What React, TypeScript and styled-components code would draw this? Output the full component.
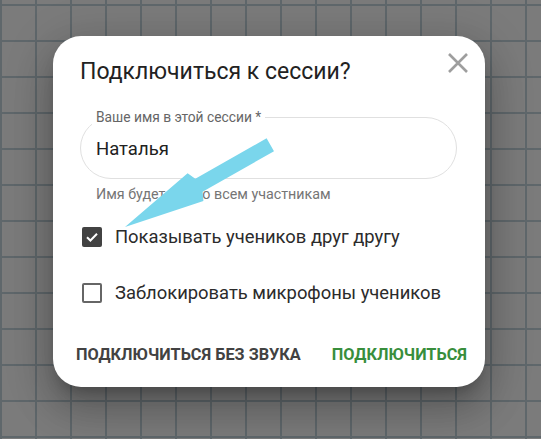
import React, { useState } from 'react';
import styled, { createGlobalStyle } from 'styled-components';

const Global = createGlobalStyle`
  html, body {
    margin: 0;
    padding: 0;
    background: #7b7b7b;
  }
  * { box-sizing: border-box; }
  body {
    font-family: Roboto, "Noto Sans", "Liberation Sans", sans-serif;
  }
`;

const Page = styled.div`
  position: relative;
  width: 541px;
  height: 439px;
  overflow: hidden;
  padding: 36px 0 0 53px;
  background-color: #7b7b7b;
  background-image:
    linear-gradient(to right, #5f676b 2px, transparent 2px),
    linear-gradient(to bottom, #5f676b 2px, transparent 2px);
  background-size: 35px 36px;
  background-position: 0 4px;
`;

const Dialog = styled.div`
  width: 432px;
  height: 351px;
  background: #fff;
  border-radius: 28px;
  padding: 20px 28px 0 27px;
  display: flex;
  flex-direction: column;
  box-shadow:
    0 11px 15px -7px rgba(0, 0, 0, 0.25),
    0 24px 38px 3px rgba(0, 0, 0, 0.16),
    0 9px 46px 8px rgba(0, 0, 0, 0.14);
`;

const Header = styled.div`
  display: flex;
  justify-content: space-between;
  align-items: flex-start;
`;

const Title = styled.h2`
  margin: 0;
  font-size: 23px;
  line-height: 32px;
  font-weight: 400;
  color: #222;
`;

const CloseButton = styled.button`
  width: 20px;
  height: 20px;
  margin: -3px -11px 0 0;
  padding: 0;
  border: none;
  background: none;
  cursor: pointer;
  display: flex;
`;

const Field = styled.fieldset`
  margin: 21px 0 0;
  padding: 14px 15px 19px;
  border: 1px solid #e0e0e0;
  border-radius: 31px;
  min-width: 0;
`;

const Legend = styled.legend`
  margin-left: -4px;
  padding: 0 4px;
  font-size: 13.8px;
  line-height: 16px;
  color: #666;
`;

const Input = styled.input`
  display: block;
  width: 100%;
  height: 20px;
  padding: 0;
  border: none;
  outline: none;
  font-family: inherit;
  font-size: 18.5px;
  color: #212121;
  background: transparent;
`;

const Helper = styled.div`
  margin: 7px 0 0 16px;
  font-size: 14.3px;
  line-height: 16px;
  color: #757575;
`;

const Options = styled.div`
  margin-top: 15px;
  display: flex;
  flex-direction: column;
  gap: 16px;
`;

const Option = styled.label`
  height: 40px;
  display: flex;
  align-items: center;
  gap: 13px;
  padding-left: 2px;
  cursor: pointer;
  font-size: 18.4px;
  line-height: 24px;
  color: #2b2b2b;
`;

const Box = styled.span<{ $checked: boolean }>`
  flex: none;
  width: 20px;
  height: 20px;
  border-radius: 2px;
  display: flex;
  align-items: center;
  justify-content: center;
  background: ${(p) => (p.$checked ? '#424242' : 'transparent')};
  border: ${(p) => (p.$checked ? 'none' : '2px solid #666')};
`;

const Footer = styled.div`
  margin: 21px -10px 0 -4px;
  display: flex;
  justify-content: space-between;
`;

const TextButton = styled.button<{ $primary?: boolean }>`
  height: 40px;
  padding: 0;
  border: none;
  background: none;
  cursor: pointer;
  font-family: inherit;
  font-size: 16.3px;
  font-weight: 700;
  text-transform: uppercase;
  color: ${(p) => (p.$primary ? '#388e3c' : '#424242')};
`;

const Pointer = styled.svg`
  position: absolute;
  left: 120px;
  top: 130px;
  width: 160px;
  height: 110px;
  pointer-events: none;
`;

export default function App() {
  const [showPupils, setShowPupils] = useState(true);
  const [muteMics, setMuteMics] = useState(false);

  const options = [
    { label: 'Показывать учеников друг другу', checked: showPupils, toggle: () => setShowPupils(!showPupils) },
    { label: 'Заблокировать микрофоны учеников', checked: muteMics, toggle: () => setMuteMics(!muteMics) },
  ];

  return (
    <>
      <Global />
      <Page>
        <Dialog>
          <Header>
            <Title>Подключиться к сессии?</Title>
            <CloseButton aria-label="Закрыть">
              <svg width="20" height="20" viewBox="0 0 20 20">
                <path d="M1 1 L19 19 M19 1 L1 19" stroke="#9e9e9e" strokeWidth="2.6" />
              </svg>
            </CloseButton>
          </Header>

          <Field>
            <Legend>Ваше имя в этой сессии *</Legend>
            <Input defaultValue="Наталья" />
          </Field>
          <Helper>Имя будет видно всем участникам</Helper>

          <Options>
            {options.map((o) => (
              <Option key={o.label} onClick={o.toggle}>
                <Box $checked={o.checked}>
                  {o.checked && (
                    <svg width="14" height="14" viewBox="0 0 14 14">
                      <path d="M2 7.2 L5.4 10.5 L12 3.8" fill="none" stroke="#fff" strokeWidth="2" />
                    </svg>
                  )}
                </Box>
                {o.label}
              </Option>
            ))}
          </Options>

          <Footer>
            <TextButton>Подключиться без звука</TextButton>
            <TextButton $primary>Подключиться</TextButton>
          </Footer>
        </Dialog>

        <Pointer viewBox="0 0 160 110">
          <polygon
            points="146.6,8.3 154,21.3 82.6,61.7 83.4,71.1 5,97 67.6,43.2 75.3,48.7"
            fill="#7ad6ec"
          />
        </Pointer>
      </Page>
    </>
  );
}
